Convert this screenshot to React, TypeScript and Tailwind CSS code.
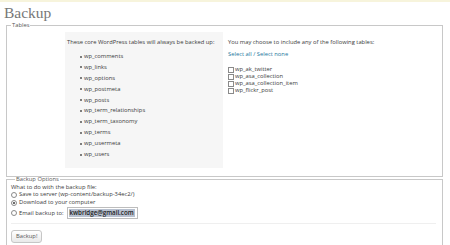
import React from 'react'

const coreTables = [
  'wp_comments',
  'wp_links',
  'wp_options',
  'wp_postmeta',
  'wp_posts',
  'wp_term_relationships',
  'wp_term_taxonomy',
  'wp_terms',
  'wp_usermeta',
  'wp_users',
]

const extraTables = ['wp_ak_twitter', 'wp_asa_collection', 'wp_asa_collection_item', 'wp_flickr_post']

const Radio = ({ checked = false }: { checked?: boolean }) => (
  <span className="inline-flex h-[6px] w-[6px] shrink-0 items-center justify-center rounded-full border border-[#8a8a8a] bg-white">
    {checked && <span className="h-[2px] w-[2px] rounded-full bg-[#3a3a3a]" />}
  </span>
)

export default function App() {
  return (
    <div
      className="h-[245px] w-[450px] overflow-hidden bg-white text-[5.8px] leading-[7px] text-[#3a3a3a]"
      style={{ fontFamily: '"Open Sans", "DejaVu Sans", sans-serif' }}
    >
      <div className="h-[2px] bg-[#f7f4dc]" />
      <h2 className="pl-[4px] pt-[2px] text-[15.5px] leading-[17px] text-[#777]" style={{ fontFamily: '"Liberation Serif", serif' }}>
        Backup
      </h2>

      {/* Tables */}
      <fieldset className="ml-[6px] mr-[7px] mt-[1px] border border-[#c8c8c8] pb-[8px]">
        <legend className="ml-[4px] px-[1px] text-[#555]">Tables</legend>
        <div className="flex gap-[5px] pl-[58px] pt-[3px]">
          <div className="w-[158px] bg-[#f6f6f6] pb-[6px] pl-[2px] pt-[7px]">
            <p className="leading-[7px]">These core WordPress tables will always be backed up:</p>
            <ul className="mt-[7px] pl-[17px]">
              {coreTables.map((t) => (
                <li key={t} className="relative h-[10.9px] leading-[7px]">
                  <span className="absolute left-[-4px] top-[2.5px] h-[2px] w-[2px] rounded-full bg-[#555]" />
                  {t}
                </li>
              ))}
            </ul>
          </div>
          <div className="pt-[7px]">
            <p>You may choose to include any of the following tables:</p>
            <p className="mt-[5px] text-[#21759b]">Select all / Select none</p>
            <div className="mt-[8px] flex flex-col">
              {extraTables.map((t) => (
                <label key={t} className="flex h-[7px] items-center gap-[1px]">
                  <span className="h-[6px] w-[6px] shrink-0 border border-[#8a8a8a] bg-white" />
                  {t}
                </label>
              ))}
            </div>
          </div>
        </div>
      </fieldset>

      {/* Backup Options */}
      <fieldset className="ml-[6px] mr-[7px] mt-[-1px] h-[80px] border border-b-0 border-[#c8c8c8] px-[4px]">
        <legend className="ml-[4px] px-[1px] text-[#555]">Backup Options</legend>
        <p className="mt-[1px]">What to do with the backup file:</p>
        <label className="flex h-[8px] items-center gap-[2px]">
          <Radio />
          Save to server (wp-content/backup-34ec2/)
        </label>
        <label className="flex h-[8px] items-center gap-[2px]">
          <Radio checked />
          Download to your computer
        </label>
        <label className="flex h-[13px] items-center gap-[2px]">
          <Radio />
          Email backup to:
          <span className="ml-[1px] flex h-[12px] w-[71px] items-center border border-[#bdbdbd] bg-white px-[1px]">
            <span className="bg-[#b7c0cf] px-[1px] text-[6.2px] font-semibold leading-[8px] text-[#222]">kwbridge@gmail.com</span>
          </span>
        </label>
        <div className="mr-[2px] mt-[3px] border-t border-[#efefef] pt-[6px]">
          <button className="h-[13px] rounded-[3px] border border-[#c6c6c6] bg-gradient-to-b from-white to-[#e9e9e9] px-[4px] text-[#555]">
            Backup!
          </button>
        </div>
      </fieldset>
    </div>
  )
}
